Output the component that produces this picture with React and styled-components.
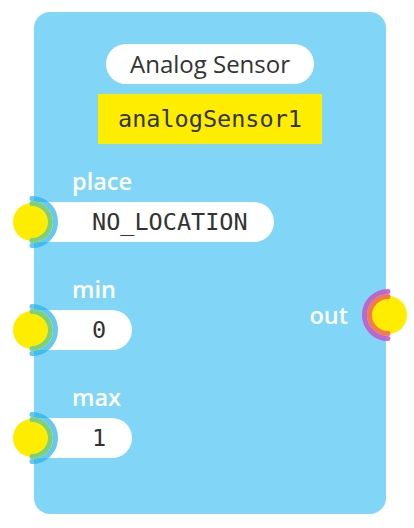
import React from 'react';
import styled, { createGlobalStyle } from 'styled-components';

const GlobalStyle = createGlobalStyle`
   body {
      margin: 0;
      background: #ffffff;
   }
`;

const inputs = [
   { name: 'place', value: 'NO_LOCATION' },
   { name: 'min', value: '0' },
   { name: 'max', value: '1' },
];

const Socket = ({ side }) => {
   const sweep = side === 'left' ? 1 : 0;
   const inner = side === 'left' ? '#7fd07c' : '#f47c4c';
   const outer = side === 'left' ? 'rgba(40, 178, 240, 0.72)' : 'rgba(196, 84, 204, 0.85)';

   return (
      <SocketIcon side={side} width='56' height='56' viewBox='0 0 56 56'>
         <circle cx='28' cy='28' r='19' fill='#ffed00' />
         <path
            d={`M28 4.5 A23.5 23.5 0 0 ${sweep} 28 51.5`}
            fill='none'
            stroke={outer}
            strokeWidth='5'
            strokeLinecap='round'
         />
         <path
            d={`M28 9.5 A18.5 18.5 0 0 ${sweep} 28 46.5`}
            fill='none'
            stroke={inner}
            strokeWidth='5'
            strokeLinecap='round'
         />
      </SocketIcon>
   );
};

const App = () => {
   return (
      <Page>
         <GlobalStyle />
         <Node>
            <Header>
               <Title>Analog Sensor</Title>
               <Identifier>analogSensor1</Identifier>
            </Header>
            <Body>
               <Inputs>
                  {inputs.map((input) => (
                     <Port key={input.name}>
                        <PortLabel>{input.name}</PortLabel>
                        <Field>
                           <Socket side='left' />
                           {input.value}
                        </Field>
                     </Port>
                  ))}
               </Inputs>
               <Output>
                  <PortLabel>out</PortLabel>
                  <Socket side='right' />
               </Output>
            </Body>
         </Node>
      </Page>
   );
};

export default App;

const Page = styled.div`
   padding: 12px 0 0 34px;
`;

const Node = styled.article`
   width: 352px;
   box-sizing: border-box;
   padding: 32px 0 56px;
   border-radius: 16px;
   background: #81d6f7;
`;

const Header = styled.header`
   display: flex;
   flex-direction: column;
   align-items: center;
   gap: 10px;
`;

const Title = styled.h2`
   margin: 0;
   height: 40px;
   padding: 0 24px;
   border-radius: 20px;
   background: #ffffff;
   color: #333333;
   font-family: 'Open Sans', 'Noto Sans', sans-serif;
   font-size: 24px;
   font-weight: 400;
   line-height: 40px;
`;

const Identifier = styled.div`
   height: 50px;
   padding: 0 20px;
   background: #ffed00;
   color: #333333;
   font-family: 'DejaVu Sans Mono', monospace;
   font-size: 23.5px;
   line-height: 50px;
`;

const Body = styled.div`
   display: flex;
   justify-content: space-between;
   align-items: center;
   margin-top: 22px;
`;

const Inputs = styled.div`
   display: flex;
   flex-direction: column;
   align-items: flex-start;
   gap: 32px;
`;

const Port = styled.div`
   display: flex;
   flex-direction: column;
   align-items: flex-start;
   gap: 6px;
`;

const PortLabel = styled.span`
   padding-left: 38px;
   color: #ffffff;
   font-family: 'Open Sans', 'Noto Sans', sans-serif;
   font-size: 23.5px;
   font-weight: 600;
   line-height: 30px;
`;

const Field = styled.div`
   position: relative;
   height: 40px;
   padding: 0 26px 0 58px;
   border-radius: 0 20px 20px 0;
   background: #ffffff;
   color: #333333;
   font-family: 'DejaVu Sans Mono', monospace;
   font-size: 23.5px;
   line-height: 40px;
`;

const Output = styled.div`
   position: relative;
   display: flex;
   align-items: center;
   height: 40px;
   margin-top: 6px;
   padding-right: 38px;

   ${PortLabel} {
      padding-left: 0;
   }
`;

const SocketIcon = styled.svg`
   position: absolute;
   top: 50%;
   margin-top: -28px;
   ${(props) => (props.side === 'left' ? 'left: -30px;' : 'right: -30px;')}
`;
